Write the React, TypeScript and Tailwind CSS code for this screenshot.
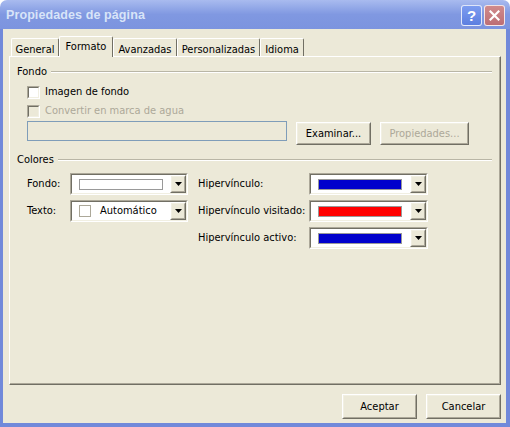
import React from "react";

function Arrow() {
  return (
    <svg width="7" height="4" viewBox="0 0 7 4">
      <path d="M0 0h7L3.5 4z" fill="#000" />
    </svg>
  );
}

function Raised({ className, children }: { className?: string; children?: React.ReactNode }) {
  return (
    <div className={"border border-t-white border-l-white border-r-[#716f64] border-b-[#716f64] bg-[#ece9d8] " + (className || "")}>
      <div className="w-full h-full border border-t-[#f1efe2] border-l-[#f1efe2] border-r-[#aca899] border-b-[#aca899] flex items-center justify-center">
        {children}
      </div>
    </div>
  );
}

function Sunken({ className, children, inner }: { className?: string; children?: React.ReactNode; inner?: string }) {
  return (
    <div className={"border border-t-[#aca899] border-l-[#aca899] border-r-white border-b-white " + (className || "")}>
      <div className={"w-full h-full border border-t-[#716f64] border-l-[#716f64] border-r-[#f1efe2] border-b-[#f1efe2] " + (inner || "bg-white")}>
        {children}
      </div>
    </div>
  );
}

function Checkbox({ label, disabled }: { label: string; disabled?: boolean }) {
  return (
    <div className="flex items-center h-[14px] ml-[10px]">
      <Sunken className="w-[13px] h-[13px]" inner={disabled ? "bg-[#ece9d8]" : "bg-white"} />
      <span className={"ml-[5px] pt-[1px] " + (disabled ? "text-[#aca899]" : "text-black")}>{label}</span>
    </div>
  );
}

function Combo({ width, color, auto }: { width: string; color?: string; auto?: boolean }) {
  return (
    <Sunken className={width + " h-[22px]"}>
      <div className="flex items-center h-full">
        {auto ? (
          <>
            <div className="ml-[7px] w-[12px] h-[12px] border border-[#aca899] bg-white" />
            <span className="ml-[9px] pt-[1px] text-black">Automático</span>
          </>
        ) : (
          <div
            className="ml-[7px] w-[84px] h-[11px] border border-[#999999]"
            style={{ backgroundColor: color }}
          />
        )}
        <Raised className="ml-auto w-[16px] h-full">
          <Arrow />
        </Raised>
      </div>
    </Sunken>
  );
}

function GroupHeader({ label, mt }: { label: string; mt: string }) {
  return (
    <div className={"flex items-center h-[14px] " + mt}>
      <span className="pt-[1px]">{label}</span>
      <div className="flex-1 ml-[4px] h-[2px] border-t border-t-[#b9b6a6] border-b border-b-white" />
    </div>
  );
}

export default function App() {
  const tabs = [
    { label: "General", w: "w-[48px]" },
    { label: "Formato", w: "w-[54px]", active: true },
    { label: "Avanzadas", w: "w-[64px]" },
    { label: "Personalizadas", w: "w-[83px]" },
    { label: "Idioma", w: "w-[44px]" },
  ];
  return (
    <div className="w-[510px] h-[427px] flex flex-col bg-white font-['DejaVu_Sans_Condensed','Liberation_Sans',sans-serif] text-[11px] text-black">
      {/* Title bar */}
      <div className="h-[29px] flex items-center pl-[6px] pr-[5px] rounded-t-[7px] bg-gradient-to-b from-[#a9bbef] via-[#8098e1] to-[#7c94df]">
        <span className="font-['Liberation_Sans',sans-serif] font-bold text-[12.5px] text-[#d8e4f8] tracking-[0.1px] pt-[1px]">
          Propiedades de página
        </span>
        <div className="ml-auto flex gap-[2px] mt-[2px]">
          <div className="w-[21px] h-[21px] rounded-[3px] border border-white/80 bg-gradient-to-b from-[#7d9cf0] to-[#5c7fe0] flex items-center justify-center">
            <span className="font-['Liberation_Sans',sans-serif] font-bold text-[15px] leading-none text-white">?</span>
          </div>
          <div className="w-[21px] h-[21px] rounded-[3px] border border-white/80 bg-gradient-to-b from-[#d08a8c] to-[#bd6e74] flex items-center justify-center">
            <svg width="11" height="11" viewBox="0 0 11 11">
              <path d="M1.5 1.5L9.5 9.5M9.5 1.5L1.5 9.5" stroke="#fff" strokeWidth="2.2" strokeLinecap="square" />
            </svg>
          </div>
        </div>
      </div>

      {/* Body */}
      <div className="flex-1 flex flex-col bg-[#ece9d8] border-l-[3px] border-r-[4px] border-b-[4px] border-[#7189da] pl-[6px] pr-[5px] pt-[7px]">
        {/* Tabs */}
        <div className="h-[20px] flex items-end pl-[2px]">
          {tabs.map((t) =>
            t.active ? (
              <div
                key={t.label}
                className={t.w + " relative z-10 h-[21px] mb-[-1px] bg-[#ece9d8] border-t border-l border-r border-t-white border-l-white border-r-[#716f64] rounded-t-[2px] flex justify-center pt-[2px]"}
              >
                {t.label}
              </div>
            ) : (
              <div
                key={t.label}
                className={t.w + " h-[18px] bg-[#ece9d8] border-t border-l border-r border-t-white border-l-white border-r-[#716f64] rounded-t-[2px] flex justify-center pt-[3px]"}
              >
                {t.label}
              </div>
            )
          )}
        </div>

        {/* Panel */}
        <div className="flex-1 border-t border-l border-r border-b border-t-white border-l-white border-r-[#716f64] border-b-[#716f64]">
          <div className="w-full h-full border-r border-b border-r-[#aca899] border-b-[#aca899] pl-[7px] pr-[7px] flex flex-col">
            <GroupHeader label="Fondo" mt="mt-[8px]" />
            <div className="mt-[6px]">
              <Checkbox label="Imagen de fondo" />
            </div>
            <div className="mt-[5px]">
              <Checkbox label="Convertir en marca de agua" disabled />
            </div>
            <div className="mt-[3px] ml-[10px] flex items-start h-[24px]">
              <div className="w-[260px] h-[20px] border border-[#7f9db9] bg-[#ece9d8]" />
              <Raised className="ml-[9px] mt-[1px] w-[75px] h-[23px]">
                <span className="pt-[1px]">Examinar...</span>
              </Raised>
              <Raised className="ml-[9px] mt-[1px] w-[89px] h-[23px]">
                <span className="pt-[1px] text-[#aca899]">Propiedades...</span>
              </Raised>
            </div>
            <GroupHeader label="Colores" mt="mt-[8px]" />
            <div className="mt-[6px] ml-[10px] grid grid-cols-[43px_118px_10px_111px_119px] gap-y-[5px] items-center">
              <span className="pt-[1px]">Fondo:</span>
              <Combo width="w-[118px]" color="#ffffff" />
              <span />
              <span className="pt-[1px]">Hipervínculo:</span>
              <Combo width="w-[119px]" color="#0000cc" />

              <span className="pt-[1px]">Texto:</span>
              <Combo width="w-[118px]" auto />
              <span />
              <span className="pt-[1px]">Hipervínculo visitado:</span>
              <Combo width="w-[119px]" color="#ff0000" />

              <span />
              <span />
              <span />
              <span className="pt-[1px]">Hipervínculo activo:</span>
              <Combo width="w-[119px]" color="#0000cc" />
            </div>
          </div>
        </div>

        {/* Bottom buttons */}
        <div className="h-[25px] mt-[9px] mb-[4px] flex justify-end gap-[9px]">
          <Raised className="w-[75px] h-[25px]">
            <span className="pt-[1px]">Aceptar</span>
          </Raised>
          <Raised className="w-[75px] h-[25px]">
            <span className="pt-[1px]">Cancelar</span>
          </Raised>
        </div>
      </div>
    </div>
  );
}
